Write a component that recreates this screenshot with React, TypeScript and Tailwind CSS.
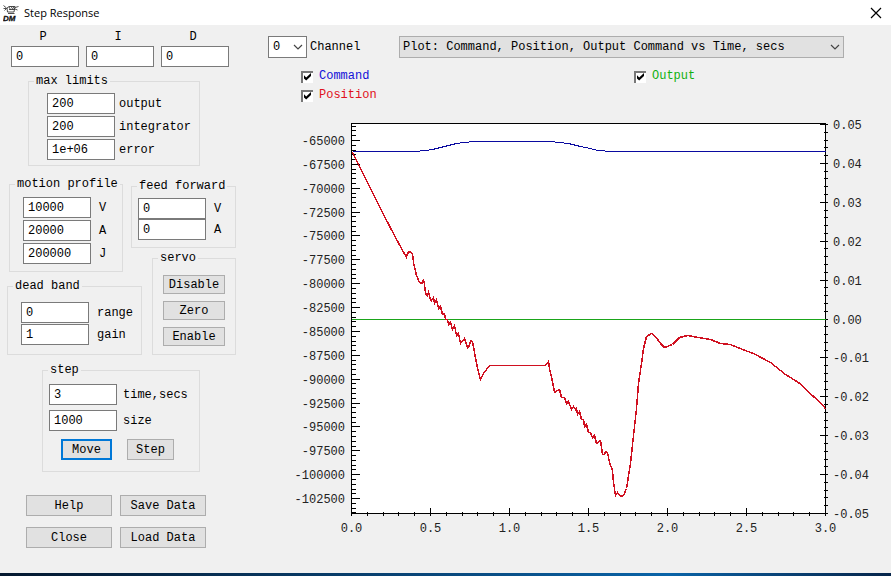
import { useState } from 'react';
import type { ReactNode } from 'react';
import { clsx } from 'clsx';

type Point = [number, number];

// plot area inside the chart's viewBox
const LEFT = 101.5;
const RIGHT = 575.5;
const TOP = 5.5;
const BOTTOM = 395.5;

const COMMAND: Point[] = [
  [102, 33], [164, 33], [175, 32], [182, 31], [190, 29], [198, 27], [206, 25], [214, 24],
  [224, 23], [300, 23], [308, 24], [318, 25], [330, 28], [340, 30], [347, 32], [362, 33], [575, 33],
];

const POSITION: Point[] = [
  [102, 34], [108, 46], [120, 70], [132, 94], [145, 119], [156, 139], [157, 135], [159, 133],
  [162, 135], [163, 144], [166, 157], [169, 164], [172, 165], [173, 161], [174, 166], [175, 175],
  [177, 177], [178, 174], [180, 181], [181, 182], [183, 179], [184, 185], [186, 181], [188, 190],
  [190, 188], [192, 196], [194, 195], [195, 201], [197, 201], [198, 206], [200, 204], [202, 211],
  [204, 207], [206, 217], [208, 215], [210, 225], [214, 220], [217, 229], [219, 227], [220, 222],
  [222, 223], [224, 234], [227, 250], [230, 261], [233, 255], [239, 247], [295, 247], [298, 243],
  [299, 250], [302, 263], [304, 274], [307, 272], [309, 271], [311, 279], [314, 279], [316, 285],
  [318, 283], [321, 291], [323, 288], [325, 291], [326, 290], [327, 296], [329, 293], [331, 301],
  [333, 301], [334, 308], [336, 306], [338, 314], [340, 314], [342, 319], [344, 317], [346, 325],
  [350, 322], [352, 336], [354, 336], [355, 333], [357, 334], [359, 344], [362, 352], [363, 364],
  [365, 377], [367, 374], [370, 378], [373, 377], [376, 370], [380, 345], [383, 317], [386, 290],
  [388, 265], [391, 245], [393, 230], [396, 218], [401, 215], [405, 218], [410, 225], [414, 229],
  [422, 226], [429, 219], [437, 217], [448, 219], [460, 221], [470, 225], [480, 226], [492, 231],
  [503, 235], [520, 244], [535, 256], [548, 264], [563, 278], [573, 287], [575, 291],
];

const toPath = (points: Point[]) => points.map(([x, y]) => `${x + 0.5},${y + 0.5}`).join(' ');

const timeX = (t: number) => Math.round(101 + t * 158) + 0.5;
const countsY = (v: number) => Math.round(22 + ((-65000 - v) / 2500) * 23.87) + 0.5;
const outputY = (v: number) => Math.round(200.5 - v * 3890) + 0.5;

const timeTicks = Array.from({ length: 31 }, (_, i) => i);
const countTicks = Array.from({ length: 82 }, (_, i) => i - 3);
const outputTicks = Array.from({ length: 51 }, (_, i) => i - 25);

function Chart({ command, position, output }: { command: boolean; position: boolean; output: boolean }) {
  return (
    <svg
      viewBox="0 0 641 424"
      className="w-full font-['Liberation_Mono',monospace] text-[12px]"
      role="img"
      aria-label="Command, Position, Output Command vs Time"
      shapeRendering="crispEdges"
    >
      <rect x={LEFT} y={TOP} width={RIGHT - LEFT} height={BOTTOM - TOP} fill="#fff" stroke="#000" />
      {countTicks.map((i) => {
        const value = -65000 - i * 500;
        const y = countsY(value);
        const major = i % 5 === 0;
        return (
          <g key={i}>
            <line x1={LEFT} x2={LEFT + (major ? 8 : 4)} y1={y} y2={y} stroke="#000" />
            {major && i < 80 && (
              <text x={95} y={y + 4} textAnchor="end" fill="#222">
                {value}
              </text>
            )}
          </g>
        );
      })}
      {outputTicks.map((i) => {
        const value = i / 500;
        const y = outputY(value);
        const major = i % 5 === 0;
        return (
          <g key={i}>
            <line x1={RIGHT - (major ? 6 : 2)} x2={RIGHT + 2} y1={y} y2={y} stroke="#000" />
            {major && (
              <text x={583} y={y + 4} fill="#222">
                {value.toFixed(2)}
              </text>
            )}
          </g>
        );
      })}
      {timeTicks.map((i) => {
        const x = timeX(i / 10);
        const major = i % 5 === 0;
        return (
          <g key={i}>
            <line x1={x} x2={x} y1={BOTTOM - (major ? 6 : 2)} y2={BOTTOM + 2} stroke="#000" />
            {major && (
              <text x={x} y={414} textAnchor="middle" fill="#222">
                {(i / 10).toFixed(1)}
              </text>
            )}
          </g>
        );
      })}
      {output && <rect x={102} y={201} width={474} height={1} fill="#1aa51a" />}
      {command && <polyline points={toPath(COMMAND)} fill="none" stroke="#0a0aa0" />}
      {position && <polyline points={toPath(POSITION)} fill="none" stroke="#d01020" strokeWidth={1.5} />}
    </svg>
  );
}

function Group({ title, className, children }: { title: string; className?: string; children: ReactNode }) {
  return (
    <fieldset className={clsx('min-w-0 border border-[#dcdcdc] px-[5px]', className)}>
      <legend className="px-[2px] leading-[15px] whitespace-nowrap">{title}</legend>
      {children}
    </fieldset>
  );
}

function Field({ label, value, gap = 'gap-1' }: { label: string; value: string; gap?: string }) {
  return (
    <label className={clsx('flex items-center', gap)}>
      <input
        defaultValue={value}
        className="h-[21px] w-[68px] border border-[#7a7a7a] bg-white px-1 outline-none"
      />
      <span>{label}</span>
    </label>
  );
}

function Button({ className, children }: { className?: string; children: ReactNode }) {
  return (
    <button
      type="button"
      className={clsx('flex items-center justify-center bg-[#e1e1e1]', className ?? 'h-[21px] border border-[#adadad]')}
    >
      {children}
    </button>
  );
}

function Chevron() {
  return (
    <svg
      viewBox="0 0 10 6"
      className="pointer-events-none absolute top-1/2 right-1 h-[6px] w-[10px] -translate-y-1/2"
      fill="none"
      stroke="#444"
      strokeWidth="1.2"
      aria-hidden="true"
    >
      <path d="M1 1l4 4 4-4" />
    </svg>
  );
}

type CheckProps = { label: string; color: string; checked: boolean; onChange: (v: boolean) => void };

function Check({ label, color, checked, onChange }: CheckProps) {
  return (
    <label className={clsx('flex items-center gap-[6px] leading-[19px]', color)}>
      <span className="relative h-[12px] w-[12px]">
        <input
          type="checkbox"
          checked={checked}
          onChange={(e) => onChange(e.target.checked)}
          className="block h-[12px] w-[12px] appearance-none border-t-2 border-l-2 border-[#777] bg-white"
        />
        {checked && (
          <svg viewBox="0 0 12 12" className="pointer-events-none absolute inset-0" fill="#000" aria-hidden="true">
            <path d="M3 4.2l2.2 2.2L10 2v3L5.2 9.6 3 7.4z" />
          </svg>
        )}
      </span>
      {label}
    </label>
  );
}

function AppIcon() {
  return (
    <svg viewBox="0 0 16 18" className="h-[18px] w-[16px]" fill="none" stroke="#222" strokeWidth="0.8" aria-hidden="true">
      <path d="M0.5 1.5l3 2.5M0.5 4.5h3M1.5 6.5l2-2" />
      <path d="M4 4l2-1.5h6L11 8H4.500z" fill="#fff" />
      <path d="M6 3l1.500 2.500M8 2.500l2 3M10 2.500l1.500 2.500M6 5.500h5.500M12 3.500l3.500-1M12 5l2.500 1M5 9.500h6.500" />
      <text
        x="0"
        y="17"
        className="font-['Liberation_Sans',sans-serif] text-[8px] font-bold italic"
        fill="#111"
        stroke="#111"
        strokeWidth="0.3"
      >
        DM
      </text>
    </svg>
  );
}

export default function App() {
  const [command, setCommand] = useState(true);
  const [position, setPosition] = useState(true);
  const [output, setOutput] = useState(true);

  return (
    <div className="flex min-h-screen flex-col bg-[#f0f0f0] font-['Liberation_Mono',monospace] text-[12px] leading-[16px] text-black">
      <header className="flex h-[25px] items-center bg-white pr-[9px] pl-[3px] font-['Open_Sans',sans-serif] text-[11px]">
        <AppIcon />
        <h1 className="ml-[5px]">Step Response</h1>
        <button type="button" aria-label="Close window" className="ml-auto">
          <svg viewBox="0 0 12 12" className="h-[12px] w-[12px]" stroke="#000" strokeWidth="1.2">
            <path d="M1 1l10 10M11 1L1 11" />
          </svg>
        </button>
      </header>

      <main className="flex flex-1">
        <section className="w-[250px] shrink-0 pt-1 pb-6">
          <div className="flex gap-[7px] pl-[11px]">
            {['P', 'I', 'D'].map((name) => (
              <label key={name} className="w-[68px]">
                <span className="block pr-1 text-center leading-[17px]">{name}</span>
                <input
                  defaultValue="0"
                  className="block h-[21px] w-full border border-[#7a7a7a] bg-white px-1 outline-none"
                />
              </label>
            ))}
          </div>

          <Group title="max limits" className="mt-[7px] ml-7 w-[172px]">
            <div className="flex flex-col gap-[2px] pt-1 pb-[5px] pl-[13px]">
              <Field label="output" value="200" />
              <Field label="integrator" value="200" />
              <Field label="error" value="1e+06" />
            </div>
          </Group>

          <div className="mt-[11px] ml-[7px] flex">
            <div className="flex w-[135px] flex-col gap-[7px]">
              <Group title="motion profile" className="ml-[2px] w-[114px]">
                <div className="flex flex-col gap-[2px] pt-[5px] pb-[7px] pl-2">
                  <Field label="V" value="10000" gap="gap-2" />
                  <Field label="A" value="20000" gap="gap-2" />
                  <Field label="J" value="200000" gap="gap-2" />
                </div>
              </Group>
              <Group title="dead band">
                <div className="flex flex-col gap-px pt-2 pb-[9px] pl-2">
                  <Field label="range" value="0" gap="gap-2" />
                  <Field label="gain" value="1" gap="gap-2" />
                </div>
              </Group>
            </div>
            <div className="-ml-[11px] flex w-[105px] flex-col gap-[3px] pt-[2px]">
              <Group title="feed forward">
                <div className="flex flex-col pt-1 pb-[7px] pl-px">
                  <Field label="V" value="0" gap="gap-2" />
                  <Field label="A" value="0" gap="gap-2" />
                </div>
              </Group>
              <Group title="servo" className="ml-[21px]">
                <div className="flex flex-col gap-[7px] px-[5px] pt-[9px] pb-2">
                  <Button className="h-[19px] border border-[#adadad]">Disable</Button>
                  <Button className="h-[19px] border border-[#adadad]">Zero</Button>
                  <Button className="h-[19px] border border-[#adadad]">Enable</Button>
                </div>
              </Group>
            </div>
          </div>

          <Group title="step" className="mt-2 ml-[42px] w-[158px]">
            <div className="flex flex-col gap-[5px] pt-[6px] pl-px">
              <Field label="time,secs" value="3" gap="gap-[6px]" />
              <Field label="size" value="1000" gap="gap-[6px]" />
            </div>
            <div className="flex gap-[15px] pt-2 pb-[11px] pl-[13px]">
              <Button className="h-[21px] w-[51px] border-2 border-[#0078d7]">Move</Button>
              <Button className="h-[21px] w-[47px] border border-[#adadad]">Step</Button>
            </div>
          </Group>

          <div className="mt-[23px] ml-[26px] grid w-[180px] grid-cols-2 gap-x-2 gap-y-[11px]">
            <Button>Help</Button>
            <Button>Save Data</Button>
            <Button>Close</Button>
            <Button>Load Data</Button>
          </div>
        </section>

        <section className="min-w-0 flex-1 pt-[11px]">
          <div className="flex items-center pr-[47px] pl-[18px]">
            <label className="flex w-[131px] shrink-0 items-center gap-[3px]">
              <span className="relative">
                <select className="block h-[22px] w-[39px] appearance-none border border-[#7a7a7a] bg-white pl-1 outline-none">
                  <option>0</option>
                  <option>1</option>
                  <option>2</option>
                  <option>3</option>
                </select>
                <Chevron />
              </span>
              Channel
            </label>
            <div className="relative min-w-0 flex-1">
              <select
                aria-label="Plot"
                className="block h-[22px] w-full appearance-none border border-[#adadad] bg-[#e1e1e1] pl-[3px] outline-none"
              >
                <option>Plot: Command, Position, Output Command vs Time, secs</option>
              </select>
              <Chevron />
            </div>
          </div>

          <div className="grid grid-cols-[333px_1fr] pt-[9px] pl-[51px]">
            <Check label="Command" color="text-[#1010d8]" checked={command} onChange={setCommand} />
            <Check label="Output" color="text-[#10b010]" checked={output} onChange={setOutput} />
            <Check label="Position" color="text-[#e01020]" checked={position} onChange={setPosition} />
          </div>

          <div className="pt-[13px]">
            <Chart command={command} position={position} output={output} />
          </div>
        </section>
      </main>

      <footer className="h-[3px] bg-linear-to-r from-[#04182f] via-[#0a64a8] via-75% to-[#06254a]" />
    </div>
  );
}
